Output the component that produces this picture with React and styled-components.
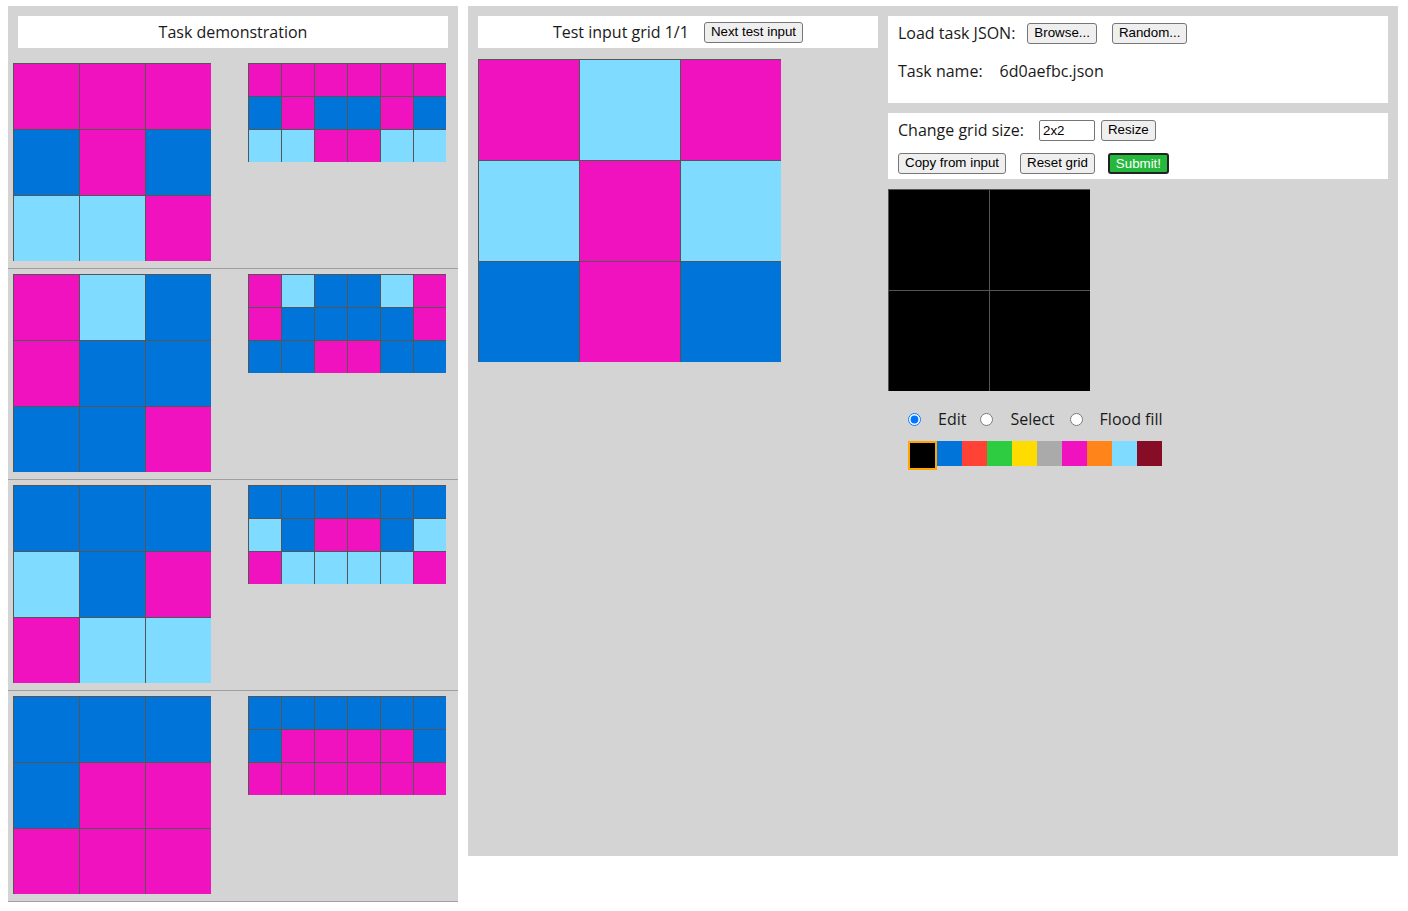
import React from 'react'
import styled, { createGlobalStyle } from 'styled-components'

const COLORS = ['#000000', '#0074D9', '#FF4136', '#2ECC40', '#FFDC00', '#AAAAAA', '#F012BE', '#FF851B', '#7FDBFF', '#870C25']

const GlobalStyle = createGlobalStyle`
    body {
        margin: 0;
        background: #fff;
        font-family: "Open Sans", "Noto Sans", sans-serif;
        color: #1a1a1a;
    }
`;

const Page = styled.div`
    display: flex;
    align-items: flex-start;
    gap: 10px;
    padding: 6px 8px;
`;

const DemoPanel = styled.div`
    width: 450px;
    background: #d4d4d4;
    padding-top: 10px;
`;

const Heading = styled.div`
    height: 32px;
    margin: ${p => p.$inset ? '0 10px 10px' : '0'};
    background: #fff;
    display: flex;
    align-items: center;
    justify-content: center;
    font-size: 16px;
`;

const Pair = styled.div`
    display: flex;
    align-items: flex-start;
    gap: 37px;
    padding: 5px 0 7px 5px;
    border-bottom: 1px solid #a0a0a0;
`;

const Board = styled.div`
    display: grid;
    grid-template-columns: repeat(${p => p.$cols}, ${p => p.$size}px);
    grid-auto-rows: ${p => p.$size}px;
`;

const Cell = styled.div`
    box-sizing: border-box;
    border-top: 1px solid #555;
    border-left: 1px solid #555;
    background: ${p => COLORS[p.$c]};
`;

const Workspace = styled.div`
    width: 930px;
    height: 850px;
    box-sizing: border-box;
    background: #d4d4d4;
    padding: 10px;
    display: flex;
    align-items: flex-start;
    gap: 10px;
`;

const TestColumn = styled.div`
    width: 400px;
    display: flex;
    flex-direction: column;
    gap: 11px;
`;

const EditColumn = styled.div`
    width: 500px;
    display: flex;
    flex-direction: column;
    align-items: flex-start;
`;

const Box = styled.div`
    align-self: stretch;
    background: #fff;
    padding: ${p => p.$pad};
    margin-bottom: 10px;
    font-size: 16px;
`;

const Row = styled.div`
    display: flex;
    align-items: center;
    height: 22px;
    margin-top: ${p => p.$top || 0}px;
`;

const Button = styled.button`
    font-family: "Liberation Sans", Arial, sans-serif;
    font-size: 13.33px;
    line-height: 16px;
    height: 21px;
    padding: 1px 6px;
    margin-left: ${p => p.$gap || 0}px;
    color: ${p => p.$go ? '#fff' : '#000'};
    background: ${p => p.$go ? '#24b83c' : '#efefef'};
    border: ${p => p.$go ? '2px solid #222' : '1px solid #767676'};
    border-radius: 3px;
`;

const SizeInput = styled.input`
    box-sizing: border-box;
    width: 56px;
    height: 21px;
    margin-left: 15px;
    padding: 1px 3px;
    font-family: "Liberation Sans", Arial, sans-serif;
    font-size: 13.33px;
    border: 1px solid #767676;
    border-radius: 2px;
`;

const Spaced = styled.span`
    margin-left: ${p => p.$gap}px;
`;

const Modes = styled.div`
    display: flex;
    align-items: center;
    height: 22px;
    margin: 17px 0 11px 20px;
    font-size: 16px;
`;

const Radio = styled.input`
    width: 13px;
    height: 13px;
    margin: 0 0 0 ${p => p.$gap || 0}px;
`;

const ModeLabel = styled.label`
    margin-left: 17px;
`;

const Palette = styled.div`
    display: flex;
    align-items: flex-start;
    margin-left: 20px;
`;

const Swatch = styled.div`
    width: 25px;
    height: 25px;
    background: ${p => COLORS[p.$c]};
    border: ${p => p.$on ? '2px solid #ffa500' : 'none'};
`;

const pairs = [
    {
        input: [[6, 6, 6], [1, 6, 1], [8, 8, 6]],
        output: [[6, 6, 6, 6, 6, 6], [1, 6, 1, 1, 6, 1], [8, 8, 6, 6, 8, 8]],
    },
    {
        input: [[6, 8, 1], [6, 1, 1], [1, 1, 6]],
        output: [[6, 8, 1, 1, 8, 6], [6, 1, 1, 1, 1, 6], [1, 1, 6, 6, 1, 1]],
    },
    {
        input: [[1, 1, 1], [8, 1, 6], [6, 8, 8]],
        output: [[1, 1, 1, 1, 1, 1], [8, 1, 6, 6, 1, 8], [6, 8, 8, 8, 8, 6]],
    },
    {
        input: [[1, 1, 1], [1, 6, 6], [6, 6, 6]],
        output: [[1, 1, 1, 1, 1, 1], [1, 6, 6, 6, 6, 1], [6, 6, 6, 6, 6, 6]],
    },
]

const testInput = [[6, 8, 6], [8, 6, 8], [1, 6, 1]]
const answer = [[0, 0], [0, 0]]

const Grid = ({ data, size }) => (
    <Board $cols={data[0].length} $size={size}>
        {data.flat().map((c, i) => <Cell key={i} $c={c} />)}
    </Board>
)

export default function App() {
    return (
        <>
            <GlobalStyle />
            <Page>
                <DemoPanel>
                    <Heading $inset>Task demonstration</Heading>
                    {pairs.map((p, i) => (
                        <Pair key={i}>
                            <Grid data={p.input} size={66} />
                            <Grid data={p.output} size={33} />
                        </Pair>
                    ))}
                </DemoPanel>
                <Workspace>
                    <TestColumn>
                        <Heading>
                            Test input grid 1/1
                            <Button $gap={15}>Next test input</Button>
                        </Heading>
                        <Grid data={testInput} size={101} />
                    </TestColumn>
                    <EditColumn>
                        <Box $pad="6px 10px 21px">
                            <Row>
                                Load task JSON:
                                <Button $gap={12}>Browse...</Button>
                                <Button $gap={15}>Random...</Button>
                            </Row>
                            <Row $top={16}>
                                Task name:
                                <Spaced $gap={17}>6d0aefbc.json</Spaced>
                            </Row>
                        </Box>
                        <Box $pad="6px 10px 5px">
                            <Row>
                                Change grid size:
                                <SizeInput defaultValue="2x2" />
                                <Button $gap={6}>Resize</Button>
                            </Row>
                            <Row $top={11}>
                                <Button>Copy from input</Button>
                                <Button $gap={14}>Reset grid</Button>
                                <Button $gap={13} $go>Submit!</Button>
                            </Row>
                        </Box>
                        <Grid data={answer} size={101} />
                        <Modes>
                            <Radio type="radio" name="mode" id="edit" defaultChecked />
                            <ModeLabel htmlFor="edit">Edit</ModeLabel>
                            <Radio type="radio" name="mode" id="select" $gap={14} />
                            <ModeLabel htmlFor="select">Select</ModeLabel>
                            <Radio type="radio" name="mode" id="fill" $gap={15} />
                            <ModeLabel htmlFor="fill">Flood fill</ModeLabel>
                        </Modes>
                        <Palette>
                            {COLORS.map((_, i) => <Swatch key={i} $c={i} $on={i === 0} />)}
                        </Palette>
                    </EditColumn>
                </Workspace>
            </Page>
        </>
    )
}
